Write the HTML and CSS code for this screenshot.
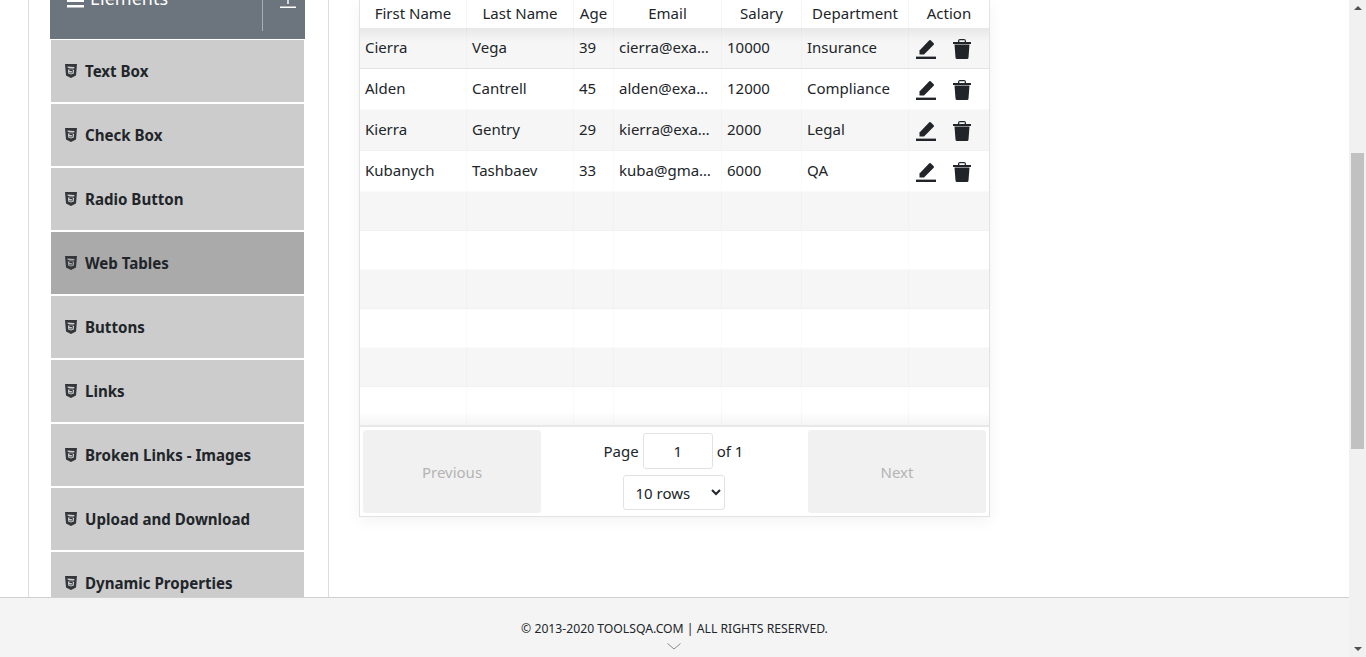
FILE: index.html
```html
<!DOCTYPE html>
<html>
<head>
  <title>Web Tables</title>
  <link rel="stylesheet" href="styles.css">
</head>
<body>
  <svg class="icon-defs" width="0" height="0">
    <symbol id="html5" viewBox="0 0 12 14">
      <path fill-rule="evenodd" d="M0 0h12l-1 11.6L6 14l-5-2.4zM2.6 2.6l.1 1.5h5l-.1 1.4H2.9l.3 4 2.8 1 2.8-1 .3-3.8H4.4l.1 1.3h2.4l-.1 1.5-.8.3-.8-.3v-.4H4.4l.1 1 1.5.5 1.5-.5.4-4.2H4.2l-.1-.5h5.2l.1-1.3z"/>
    </symbol>
    <symbol id="edit" viewBox="0 0 20 20">
      <path d="M0 17.600h20V20H0z"/>
      <path d="M3.500 15.500v-4L13.300 1.300a1 1 0 0 1 1.400 0l3 3a1 1 0 0 1 0 1.400L8 15.500z"/>
    </symbol>
    <symbol id="trash" viewBox="0 0 18 20">
      <path fill-rule="evenodd" d="M5 3V2a2 2 0 0 1 2-2h4a2 2 0 0 1 2 2v1h5v2H0V3zM6.300 3h5.400V1.300H6.300zM1.500 5.600h15l-1 12.900a1.500 1.500 0 0 1-1.500 1.500H4a1.500 1.500 0 0 1-1.500-1.500z"/>
    </symbol>
  </svg>

  <div class="window">
    <div class="page">
      <div class="content">
        <aside class="sidebar">
          <div class="group-header">
            <svg class="burger" viewBox="0 0 17 14"><path d="M0 0h17v2.500H0zM0 5.500h17v2.500H0z" fill="#fff"/><path d="M0 11h17v2.500H0z" fill="#fff"/></svg>
            <span class="group-title">Elements</span>
            <span class="group-divider"></span>
            <svg class="collapse" viewBox="0 0 16 16"><path d="M0 14.500h16V16H0zM8 0l4.500 4.500-1 1-2.800-2.800V12H7.300V2.700L4.500 5.500l-1-1z" fill="#fff"/></svg>
          </div>
          <ul class="menu">
            <li class="menu-item"><svg class="html5"><use href="#html5"/></svg>Text Box</li>
            <li class="menu-item"><svg class="html5"><use href="#html5"/></svg>Check Box</li>
            <li class="menu-item"><svg class="html5"><use href="#html5"/></svg>Radio Button</li>
            <li class="menu-item active"><svg class="html5"><use href="#html5"/></svg>Web Tables</li>
            <li class="menu-item"><svg class="html5"><use href="#html5"/></svg>Buttons</li>
            <li class="menu-item"><svg class="html5"><use href="#html5"/></svg>Links</li>
            <li class="menu-item"><svg class="html5"><use href="#html5"/></svg>Broken Links - Images</li>
            <li class="menu-item"><svg class="html5"><use href="#html5"/></svg>Upload and Download</li>
            <li class="menu-item"><svg class="html5"><use href="#html5"/></svg>Dynamic Properties</li>
          </ul>
        </aside>

        <main class="main">
          <div class="table-wrap">
            <table class="data-table">
              <colgroup>
                <col class="col-name"><col class="col-name"><col class="col-age"><col class="col-email"><col class="col-salary"><col class="col-name"><col class="col-action">
              </colgroup>
              <thead>
                <tr><th>First Name</th><th>Last Name</th><th>Age</th><th>Email</th><th>Salary</th><th>Department</th><th>Action</th></tr>
              </thead>
              <tbody>
                <tr class="filled">
                  <td>Cierra</td><td>Vega</td><td>39</td><td>cierra@example.com</td><td>10000</td><td>Insurance</td>
                  <td><span class="actions"><svg class="edit"><use href="#edit"/></svg><svg class="trash"><use href="#trash"/></svg></span></td>
                </tr>
                <tr class="filled">
                  <td>Alden</td><td>Cantrell</td><td>45</td><td>alden@example.com</td><td>12000</td><td>Compliance</td>
                  <td><span class="actions"><svg class="edit"><use href="#edit"/></svg><svg class="trash"><use href="#trash"/></svg></span></td>
                </tr>
                <tr class="filled">
                  <td>Kierra</td><td>Gentry</td><td>29</td><td>kierra@example.com</td><td>2000</td><td>Legal</td>
                  <td><span class="actions"><svg class="edit"><use href="#edit"/></svg><svg class="trash"><use href="#trash"/></svg></span></td>
                </tr>
                <tr class="filled">
                  <td>Kubanych</td><td>Tashbaev</td><td>33</td><td>kuba@gmail.com</td><td>6000</td><td>QA</td>
                  <td><span class="actions"><svg class="edit"><use href="#edit"/></svg><svg class="trash"><use href="#trash"/></svg></span></td>
                </tr>
                <tr><td></td><td></td><td></td><td></td><td></td><td></td><td></td></tr>
                <tr><td></td><td></td><td></td><td></td><td></td><td></td><td></td></tr>
                <tr><td></td><td></td><td></td><td></td><td></td><td></td><td></td></tr>
                <tr><td></td><td></td><td></td><td></td><td></td><td></td><td></td></tr>
                <tr><td></td><td></td><td></td><td></td><td></td><td></td><td></td></tr>
                <tr class="last"><td></td><td></td><td></td><td></td><td></td><td></td><td></td></tr>
              </tbody>
            </table>
            <div class="pagination">
              <button class="page-btn" disabled>Previous</button>
              <div class="page-center">
                <div class="page-line">Page <input class="page-input" value="1"> of 1</div>
                <select class="page-size"><option>10 rows</option></select>
              </div>
              <button class="page-btn" disabled>Next</button>
            </div>
          </div>
        </main>
      </div>

      <footer class="footer">
        <span>© 2013-2020 TOOLSQA.COM | ALL RIGHTS RESERVED.</span>
        <svg class="footer-chevron" viewBox="0 0 14 7"><path d="M.5.5L7 6l6.500-5.500" fill="none" stroke="#8a8a8a" stroke-width="1"/></svg>
      </footer>
    </div>

    <div class="scrollbar">
      <span class="arrow-up"></span>
      <span class="thumb"></span>
      <span class="arrow-down"></span>
    </div>
  </div>
</body>
</html>
```

FILE: styles.css
```css
* {
  box-sizing: border-box;
}
html, body {
  margin: 0;
  height: 100%;
}
body {
  font-family: "Noto Sans", "Open Sans", sans-serif;
  font-size: 15px;
  color: #212529;
  background: #fff;
  overflow: hidden;
}
.icon-defs {
  display: block;
  height: 0;
}
.window {
  display: flex;
  height: 657px;
}
.page {
  flex: 1;
  min-width: 0;
  display: flex;
  flex-direction: column;
}
.content {
  flex: 1;
  min-height: 0;
  display: flex;
  overflow: hidden;
  padding-left: 28px;
}

/* sidebar */
.sidebar {
  width: 301px;
  flex: none;
  height: 100%;
  padding-left: 21px;
  border-left: 1px solid #dcdcdc;
  border-right: 1px solid #dcdcdc;
  overflow: hidden;
}
.group-header {
  width: 255px;
  height: 60px;
  margin-top: -21px;
  display: flex;
  align-items: flex-start;
  background: #6c757d;
  color: #fff;
}
.burger {
  width: 17px;
  height: 14px;
  margin: 15px 0 0 17px;
}
.group-title {
  font-size: 18px;
  line-height: 38px;
  margin-left: 6px;
  width: 172px;
}
.group-divider {
  width: 1px;
  height: 52px;
  background: #a9aeb3;
}
.collapse {
  width: 16px;
  height: 16px;
  margin: 13px 0 0 17px;
}
.menu {
  list-style: none;
  margin: 1px 0 0 1px;
  padding: 0;
  width: 253px;
  display: flex;
  flex-direction: column;
  gap: 2px;
}
.menu-item {
  height: 62px;
  flex: none;
  display: flex;
  align-items: center;
  padding-left: 14px;
  background: #cccccc;
  font-size: 15.1px;
  font-weight: 700;
}
.menu-item.active {
  background: #aaaaaa;
}
.html5 {
  width: 12px;
  height: 14px;
  margin-right: 8px;
  fill: #33363b;
  flex: none;
}

/* table */
.main {
  flex: 1;
  padding-left: 30px;
}
.table-wrap {
  width: 631px;
  border: 1px solid #e2e2e2;
  border-top: 0;
  box-shadow: 0 4px 15px rgba(0, 0, 0, .05);
}
.data-table {
  width: 629px;
  table-layout: fixed;
  border-collapse: separate;
  border-spacing: 0;
}
.col-name {
  width: 107px;
}
.col-age {
  width: 40px;
}
.col-email {
  width: 108px;
}
.col-salary {
  width: 80px;
}
.col-action {
  width: 80px;
}
.data-table th {
  height: 28px;
  padding: 0 5px 2px;
  font-weight: 400;
  text-align: center;
  background: #fff;
  border-right: 1px solid #f5f5f5;
  white-space: nowrap;
}
.data-table th:last-child, .data-table td:last-child {
  border-right: 0;
}
.data-table td {
  height: 39px;
  padding: 0 8px 2px 5px;
  border-right: 1px solid rgba(0, 0, 0, .02);
  border-bottom: 1px solid rgba(0, 0, 0, .02);
  white-space: nowrap;
  overflow: hidden;
  text-overflow: ellipsis;
}
.data-table tr.filled td {
  height: 41px;
}
.data-table tbody tr:nth-child(odd) td {
  background: #f6f6f6;
}
/* soft shadow the header casts on the first row */
.data-table tbody tr:first-child td {
  background: linear-gradient(#e8e8e8, #f6f6f6 14px);
}
.data-table tr.last td {
  height: 38px;
  border-bottom: 0;
  background: linear-gradient(#fff 24px, #f5f5f5);
}
.actions {
  display: flex;
  align-items: center;
  padding-top: 4px;
  padding-left: 2px;
}
.edit {
  width: 20px;
  height: 20px;
  fill: #212529;
  flex: none;
}
.trash {
  width: 18px;
  height: 20px;
  margin-left: 17px;
  fill: #212529;
  flex: none;
}

/* pagination */
.pagination {
  display: flex;
  height: 91px;
  padding: 3px;
  background: #fff;
  border-top: 2px solid #e8e8e8;
}
.page-btn {
  width: 178px;
  flex: none;
  border: 0;
  border-radius: 3px;
  background: #f1f1f1;
  color: #b4b4b4;
  font: inherit;
}
.page-center {
  flex: 1;
  display: flex;
  flex-direction: column;
  align-items: center;
  padding: 3px 2px 0 0;
  gap: 6px;
}
.page-line {
  display: flex;
  align-items: center;
  gap: 4px;
}
.page-input {
  width: 70px;
  height: 36px;
  border: 1px solid #e2e2e2;
  border-radius: 3px;
  text-align: center;
  font: inherit;
  color: #212529;
}
.page-size {
  width: 102px;
  height: 35px;
  padding-left: 8px;
  border: 1px solid #e2e2e2;
  border-radius: 3px;
  background: #fff;
  font: inherit;
  color: #212529;
}

/* footer */
.footer {
  flex: none;
  height: 60px;
  display: flex;
  flex-direction: column;
  align-items: center;
  padding-top: 22px;
  background: #f4f4f4;
  border-top: 1px solid #cfcfcf;
  font-size: 12.2px;
  line-height: 17px;
}
.footer-chevron {
  width: 14px;
  height: 7px;
  margin: 6px 2px 0 0;
}

/* scrollbar drawn as the screenshot has it */
.scrollbar {
  width: 17px;
  flex: none;
  display: flex;
  flex-direction: column;
  align-items: center;
  background: #f1f1f1;
}
.arrow-up {
  margin-top: 6px;
  border: 4px solid transparent;
  border-top: 0;
  border-bottom-color: #505050;
}
.thumb {
  width: 13px;
  height: 296px;
  margin-top: 143px;
  background: #c1c1c1;
}
.arrow-down {
  margin-top: auto;
  margin-bottom: 6px;
  border: 4px solid transparent;
  border-bottom: 0;
  border-top-color: #505050;
}
```
